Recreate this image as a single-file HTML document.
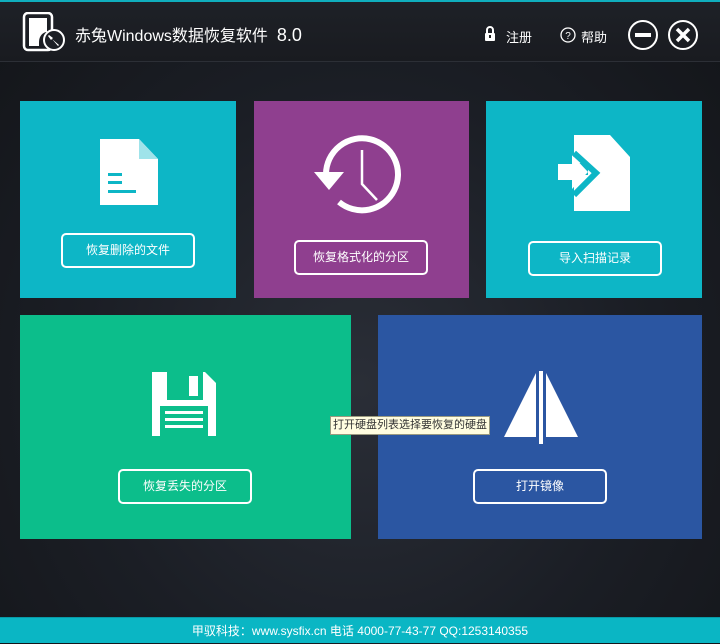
<!DOCTYPE html>
<html><head><meta charset="utf-8"><style>
*{margin:0;padding:0;box-sizing:border-box}
body{width:720px;height:643px;overflow:hidden;position:relative;font-family:"Liberation Sans","Noto Sans CJK SC",sans-serif;background:radial-gradient(ellipse at 50% 60%,#2a2e37 0%,#1b1e25 55%,#131519 100%);color:#fff}
.top{position:absolute;left:0;top:0;width:720px;height:2px;background:#10aebd}
.hdr{position:absolute;left:0;top:2px;width:720px;height:60px;background:linear-gradient(#1e2127,#191b20);border-bottom:1px solid #2c2f36}
.t{position:absolute;font-size:15px;white-space:nowrap}
.tile{position:absolute}
.btn{position:absolute;border:2px solid #fff;border-radius:5px;font-size:12px;text-align:center;line-height:30px;color:#fff}
.foot{position:absolute;left:0;top:617px;width:720px;height:26px;background:#0ab6c4;font-size:12px;text-align:center;line-height:26px;border-top:1px solid #089aa7}
.tip{position:absolute;left:330px;top:416px;width:160px;height:19px;background:#fffde0;border:1px solid #9a9a80;color:#333;font-size:11px;line-height:17px;padding-left:2px;white-space:nowrap;overflow:hidden}
</style></head><body>
<div class="top"></div>
<div class="hdr"></div>
<svg style="position:absolute;left:22px;top:12px" width="44" height="40" viewBox="0 0 44 40"><rect x="2" y="1" width="28" height="37" rx="4" fill="none" stroke="#fff" stroke-width="2.5"/><path d="M7 6h18v14c-4 0-8 4-8 10v4H7z" fill="#fff"/><circle cx="32" cy="28" r="10" fill="#1c1f25" stroke="#fff" stroke-width="2"/><path d="M27 23l4 3-1 1 7 6-1 1-6-7-1 1-3-4z" fill="#fff"/></svg>
<div class="t" style="left:75px;top:22px;font-size:16px">赤兔Windows数据恢复软件 &nbsp;<span style="font-size:18px">8.0</span></div>
<svg style="position:absolute;left:484px;top:26px" width="12" height="16" viewBox="0 0 12 16"><path d="M3 7V4a3 3 0 0 1 6 0v3" fill="none" stroke="#fff" stroke-width="2"/><rect x="1" y="7" width="10" height="8" rx="1" fill="#fff"/><rect x="5" y="9" width="2" height="3" fill="#222"/></svg>
<div class="t" style="left:506px;top:27px;font-size:13px">注册</div>
<svg style="position:absolute;left:560px;top:27px" width="16" height="16" viewBox="0 0 16 16"><circle cx="8" cy="8" r="7" fill="none" stroke="#fff" stroke-width="1.3"/><text x="8" y="12" font-size="10" fill="#fff" text-anchor="middle" font-family="Liberation Sans">?</text></svg>
<div class="t" style="left:581px;top:27px;font-size:13px">帮助</div>
<svg style="position:absolute;left:627px;top:19px" width="72" height="32" viewBox="0 0 72 32"><circle cx="16" cy="16" r="14" fill="none" stroke="#fff" stroke-width="2"/><rect x="8" y="14" width="16" height="4" fill="#fff"/><circle cx="56" cy="16" r="14" fill="none" stroke="#fff" stroke-width="2"/><path d="M50 10l12 12M62 10L50 22" stroke="#fff" stroke-width="3.5"/></svg>

<div class="tile" style="left:20px;top:101px;width:216px;height:197px;background:#0db6c6"></div>
<svg style="position:absolute;left:100px;top:139px" width="60" height="70" viewBox="0 0 60 70"><path d="M0 0h39l19 20v46H0z" fill="#fff"/><path d="M39 0v20h19" fill="#9fe3ea"/><rect x="8" y="34" width="14" height="3" fill="#0db6c6"/><rect x="8" y="42" width="14" height="3" fill="#0db6c6"/><rect x="8" y="51" width="28" height="3" fill="#0db6c6"/></svg>
<div class="btn" style="left:61px;top:233px;width:134px;height:35px">恢复删除的文件</div>

<div class="tile" style="left:254px;top:101px;width:215px;height:197px;background:#8f3f8f"></div>
<svg style="position:absolute;left:310px;top:132px" width="100" height="90" viewBox="0 0 100 90"><path d="M16 42A36 36 0 1 1 29 70" fill="none" stroke="#fff" stroke-width="6"/><path d="M4 40h30L19 58z" fill="#fff"/><path d="M52 18v34l15 16" fill="none" stroke="#fff" stroke-width="2.5"/></svg>
<div class="btn" style="left:294px;top:240px;width:134px;height:35px">恢复格式化的分区</div>

<div class="tile" style="left:486px;top:101px;width:216px;height:197px;background:#0db6c6"></div>
<svg style="position:absolute;left:558px;top:135px" width="74" height="76" viewBox="0 0 74 76"><path d="M16 0h36l20 22v54H16V40h14V28H16z" fill="#fff"/><path d="M0 29h14v-9l16 17-16 17v-9H0z" fill="#fff"/><path d="M16 18l22 20-22 22" fill="none" stroke="#0db6c6" stroke-width="6"/></svg>
<div class="btn" style="left:528px;top:241px;width:134px;height:35px">导入扫描记录</div>

<div class="tile" style="left:20px;top:315px;width:331px;height:224px;background:#0cbe8b"></div>
<svg style="position:absolute;left:152px;top:372px" width="66" height="66" viewBox="0 0 66 66"><path d="M0 0h53l11 11v53H0z" fill="#fff"/><rect x="15" y="0" width="36" height="28" fill="#0cbe8b"/><rect x="37" y="4" width="9" height="20" fill="#fff"/><rect x="8" y="34" width="48" height="30" fill="#0cbe8b"/><rect x="13" y="39" width="38" height="3" fill="#fff"/><rect x="13" y="46" width="38" height="3" fill="#fff"/><rect x="13" y="53" width="38" height="3" fill="#fff"/></svg>
<div class="btn" style="left:118px;top:469px;width:134px;height:35px">恢复丢失的分区</div>

<div class="tile" style="left:378px;top:315px;width:324px;height:224px;background:#2b56a2"></div>
<svg style="position:absolute;left:503px;top:371px" width="76" height="74" viewBox="0 0 76 74"><path d="M33 2L1 66h32z" fill="#fff"/><rect x="36" y="0" width="4" height="73" fill="#fff"/><path d="M43 2l32 64H43z" fill="#fff"/></svg>
<div class="btn" style="left:473px;top:469px;width:134px;height:35px">打开镜像</div>

<div class="tip">打开硬盘列表选择要恢复的硬盘</div>
<div class="foot">甲驭科技：www.sysfix.cn 电话 4000-77-43-77 QQ:1253140355</div>
</body></html>
